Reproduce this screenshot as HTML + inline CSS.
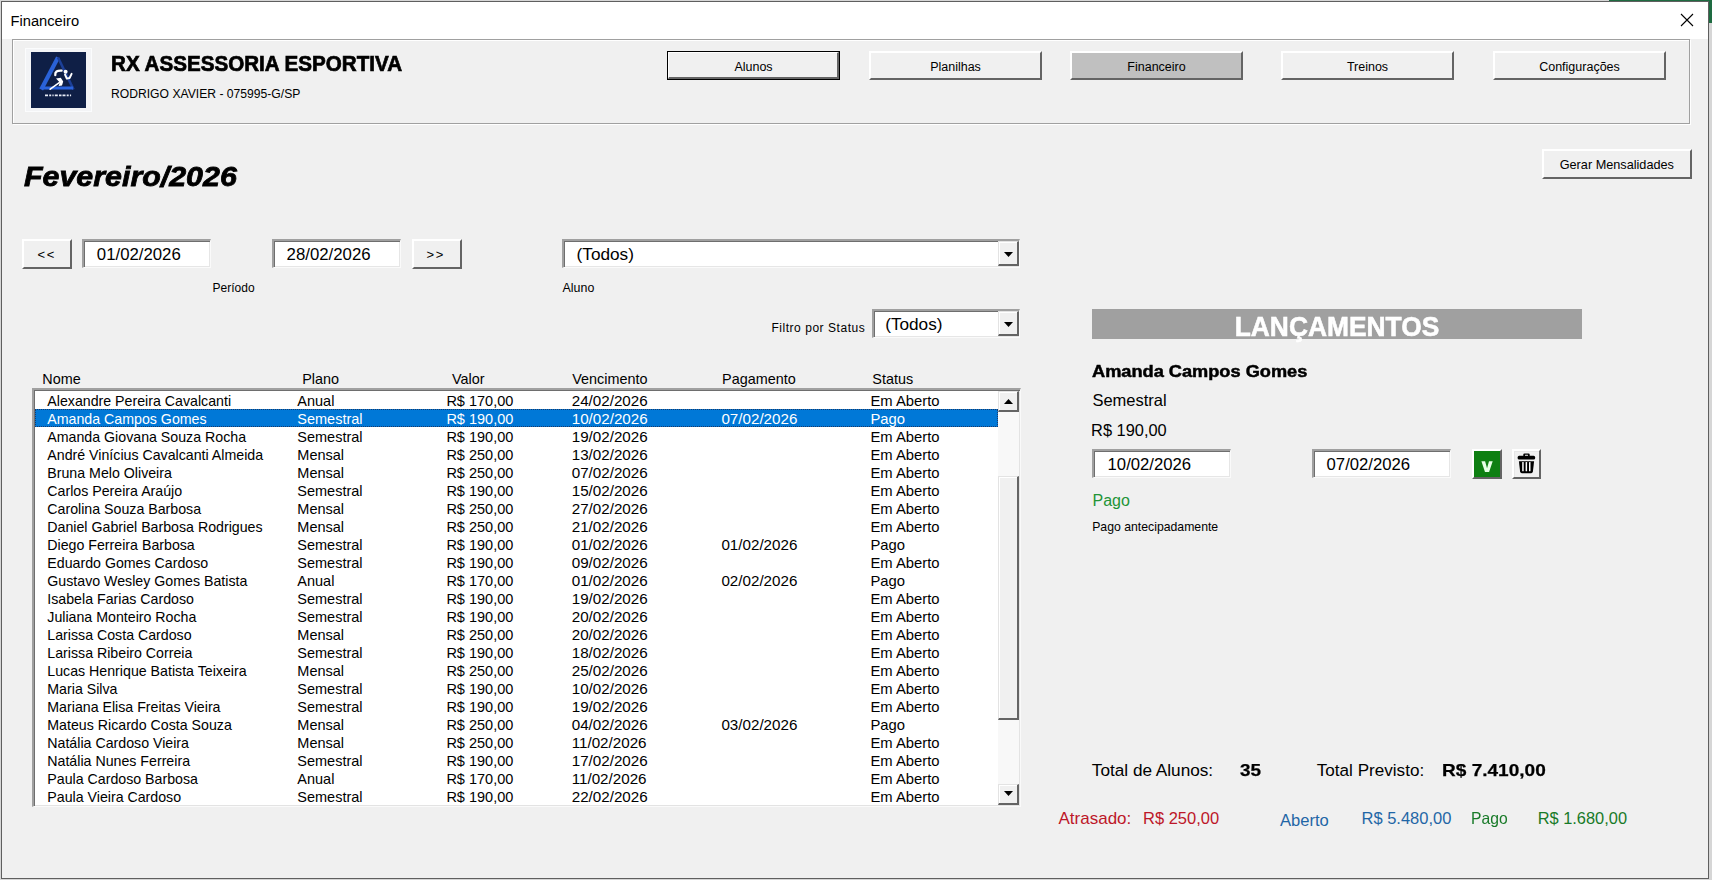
<!DOCTYPE html>
<html><head><meta charset="utf-8">
<style>
*{margin:0;padding:0;box-sizing:border-box}
html,body{width:1712px;height:880px;overflow:hidden;background:#d6d6d6;font-family:"Liberation Sans",sans-serif;color:#000}
.a{position:absolute;white-space:nowrap;line-height:1}
</style></head><body>
<div class="a" style="left:0px;top:0px;width:1712px;height:880px;background:#d6d6d6"></div>
<div class="a" style="left:1609px;top:0px;width:103px;height:2px;background:#1e6b41"></div>
<div class="a" style="left:1709px;top:0px;width:3px;height:23px;background:#1e6b41"></div>
<div class="a" style="left:1px;top:1px;width:1708px;height:878px;background:#f0f0f0;border:1px solid #5f5f5f"></div>
<div class="a" style="left:2px;top:2px;width:1706px;height:37px;background:#fff"></div>
<span class="a" style="left:10.50px;top:14.00px;font-size:14.7px;letter-spacing:0px;">Financeiro</span>
<svg class="a" style="left:1680px;top:13px" width="14" height="14"><path d="M1 1L13 13M13 1L1 13" stroke="#000" stroke-width="1.1"/></svg>
<div class="a" style="left:13px;top:40px;width:1678px;height:85px;border:1px solid #fff"></div>
<div class="a" style="left:12px;top:39px;width:1678px;height:85px;border:1px solid #a0a0a0"></div>
<div class="a" style="left:25px;top:48px;width:67px;height:64px;background:#f3f4f6;border:1px solid #fbfcfd"></div>
<svg class="a" style="left:31px;top:52px" width="55" height="56" viewBox="0 0 55 56">
<defs>
<linearGradient id="tl" x1="0" y1="0" x2="1" y2="0"><stop offset="0" stop-color="#1539a0"/><stop offset="0.5" stop-color="#2d68e0"/><stop offset="1" stop-color="#1a45b0"/></linearGradient>
<filter id="gl"><feGaussianBlur stdDeviation="0.6"/></filter>
</defs>
<rect width="55" height="56" fill="#0f1f46"/>
<g filter="url(#gl)">
<path d="M27 5.5 L10.2 37.5" stroke="#2a62d8" stroke-width="4.2"/>
<path d="M27 5.5 L42.6 37.5" stroke="#1b3f98" stroke-width="2.6"/>
<path d="M11 36 H42" stroke="#2b64dc" stroke-width="3"/>
</g>
<circle cx="34.6" cy="19.8" r="2" fill="#fff"/>
<path d="M24.3 23 Q23.6 18.2 30.6 18.6" stroke="#fff" stroke-width="2.3" fill="none" stroke-linecap="round"/>
<path d="M34 22.5 L35.8 26.6 L38.6 26 L40.6 21.8" stroke="#fff" stroke-width="1.9" fill="none" stroke-linejoin="round" stroke-linecap="round"/>
<path d="M25 26.4 L29.8 25.8 L32.2 29.4 L31 33.4 L27.6 33.9 L28.8 30.6 Z" fill="#fff"/>
<path d="M28.6 30.4 L19.2 37.2" stroke="#fff" stroke-width="1.6" stroke-linecap="round"/>
<path d="M14 43.4 H41" stroke="#e8ecf6" stroke-width="1.7" stroke-dasharray="3 1.2 2 1.2 1.2 1.2 3 1.2 2.5 1" />
</svg>
<span class="a" style="left:111.40px;top:53.00px;font-size:21.8px;letter-spacing:0px;transform:scaleX(0.945);transform-origin:0 0;font-weight:bold;-webkit-text-stroke:0.7px #000">RX ASSESSORIA ESPORTIVA</span>
<span class="a" style="left:111.00px;top:88.00px;font-size:12.15px;letter-spacing:0px;">RODRIGO XAVIER - 075995-G/SP</span>
<div class="a" style="left:667px;top:51px;width:173px;height:29px;background:#f0f0f0;border:1px solid #000"></div>
<div class="a" style="left:668px;top:52px;width:171px;height:27px;border-top:1px solid #fff;border-left:1px solid #fff;border-right:2px solid #646464;border-bottom:2px solid #646464"></div>
<span class="a" style="left:667px;width:173px;text-align:center;top:61.00px;font-size:12.5px">Alunos</span>
<div class="a" style="left:869px;top:51px;width:173px;height:29px;background:#f0f0f0;border-top:2px solid #fff;border-left:2px solid #fff;border-right:2px solid #646464;border-bottom:2px solid #646464"></div>
<span class="a" style="left:869px;width:173px;text-align:center;top:61.00px;font-size:12.5px">Planilhas</span>
<div class="a" style="left:1070px;top:51px;width:173px;height:29px;background:#c0c0c0;border-top:2px solid #fff;border-left:2px solid #fff;border-right:2px solid #646464;border-bottom:2px solid #646464"></div>
<span class="a" style="left:1070px;width:173px;text-align:center;top:61.00px;font-size:12.5px">Financeiro</span>
<div class="a" style="left:1281px;top:51px;width:173px;height:29px;background:#f0f0f0;border-top:2px solid #fff;border-left:2px solid #fff;border-right:2px solid #646464;border-bottom:2px solid #646464"></div>
<span class="a" style="left:1281px;width:173px;text-align:center;top:61.00px;font-size:12.5px">Treinos</span>
<div class="a" style="left:1493px;top:51px;width:173px;height:29px;background:#f0f0f0;border-top:2px solid #fff;border-left:2px solid #fff;border-right:2px solid #646464;border-bottom:2px solid #646464"></div>
<span class="a" style="left:1493px;width:173px;text-align:center;top:61.00px;font-size:12.5px">Configurações</span>
<div class="a" style="left:1542px;top:149px;width:150px;height:30px;background:#f0f0f0;border-top:2px solid #fff;border-left:2px solid #fff;border-right:2px solid #646464;border-bottom:2px solid #646464"></div>
<span class="a" style="left:1559.70px;top:159.00px;font-size:12.7px;letter-spacing:0px;">Gerar Mensalidades</span>
<span class="a" style="left:24.30px;top:163.00px;font-size:28px;letter-spacing:0px;transform:scaleX(1.085);transform-origin:0 0;font-weight:bold;font-style:italic;-webkit-text-stroke:0.8px #000">Fevereiro/2026</span>
<div class="a" style="left:22px;top:239px;width:50px;height:30px;background:#f0f0f0;border-top:2px solid #fff;border-left:2px solid #fff;border-right:2px solid #646464;border-bottom:2px solid #646464"></div>
<span class="a" style="left:37.50px;top:248.00px;font-size:13px;letter-spacing:1.6px;">&lt;&lt;</span>
<div class="a" style="left:412px;top:239px;width:50px;height:30px;background:#f0f0f0;border-top:2px solid #fff;border-left:2px solid #fff;border-right:2px solid #646464;border-bottom:2px solid #646464"></div>
<span class="a" style="left:426.50px;top:248.00px;font-size:13px;letter-spacing:1.6px;">&gt;&gt;</span>
<div class="a" style="left:82px;top:239px;width:129px;height:29px;background:#fff;border-top:2px solid #a0a0a0;border-left:2px solid #a0a0a0;border-right:1px solid #fafafa;border-bottom:1px solid #fafafa;box-shadow:inset 1px 1px 0 #6e6e6e, inset -1px -1px 0 #e6e6e6"></div>
<span class="a" style="left:96.80px;top:247.00px;font-size:16.8px;letter-spacing:0px;">01/02/2026</span>
<div class="a" style="left:272px;top:239px;width:129px;height:29px;background:#fff;border-top:2px solid #a0a0a0;border-left:2px solid #a0a0a0;border-right:1px solid #fafafa;border-bottom:1px solid #fafafa;box-shadow:inset 1px 1px 0 #6e6e6e, inset -1px -1px 0 #e6e6e6"></div>
<span class="a" style="left:286.60px;top:247.00px;font-size:16.8px;letter-spacing:0px;">28/02/2026</span>
<span class="a" style="left:212.60px;top:282.00px;font-size:12px;letter-spacing:0px;">Período</span>
<div class="a" style="left:562px;top:239px;width:458px;height:29px;background:#fff;border-top:2px solid #a0a0a0;border-left:2px solid #a0a0a0;border-right:1px solid #fafafa;border-bottom:1px solid #fafafa;box-shadow:inset 1px 1px 0 #6e6e6e, inset -1px -1px 0 #e6e6e6"></div>
<div class="a" style="left:998px;top:241px;width:21px;height:25px;background:#f0f0f0;border-top:1px solid #e3e3e3;border-left:1px solid #e3e3e3;border-right:2px solid #646464;border-bottom:2px solid #646464;box-shadow:inset 1px 1px 0 #fff"></div>
<svg class="a" style="left:1004px;top:252px" width="9" height="5"><path d="M0 0H9L4.5 5Z" fill="#000"/></svg>
<span class="a" style="left:576.60px;top:246.00px;font-size:17.2px;letter-spacing:0px;">(Todos)</span>
<span class="a" style="left:562.60px;top:282.00px;font-size:12.4px;letter-spacing:0px;">Aluno</span>
<span class="a" style="left:771.40px;top:322.00px;font-size:12px;letter-spacing:0.54px;">Filtro por Status</span>
<div class="a" style="left:872px;top:309px;width:148px;height:29px;background:#fff;border-top:2px solid #a0a0a0;border-left:2px solid #a0a0a0;border-right:1px solid #fafafa;border-bottom:1px solid #fafafa;box-shadow:inset 1px 1px 0 #6e6e6e, inset -1px -1px 0 #e6e6e6"></div>
<div class="a" style="left:998px;top:311px;width:21px;height:25px;background:#f0f0f0;border-top:1px solid #e3e3e3;border-left:1px solid #e3e3e3;border-right:2px solid #646464;border-bottom:2px solid #646464;box-shadow:inset 1px 1px 0 #fff"></div>
<svg class="a" style="left:1004px;top:322px" width="9" height="5"><path d="M0 0H9L4.5 5Z" fill="#000"/></svg>
<span class="a" style="left:885.20px;top:316.00px;font-size:17.2px;letter-spacing:0px;">(Todos)</span>
<span class="a" style="left:42.30px;top:372.00px;font-size:14.4px;letter-spacing:0px;">Nome</span>
<span class="a" style="left:302.20px;top:372.00px;font-size:14.4px;letter-spacing:0px;">Plano</span>
<span class="a" style="left:452.00px;top:372.00px;font-size:14.4px;letter-spacing:0px;">Valor</span>
<span class="a" style="left:572.30px;top:372.00px;font-size:14.4px;letter-spacing:0px;">Vencimento</span>
<span class="a" style="left:722.10px;top:372.00px;font-size:14.4px;letter-spacing:0px;">Pagamento</span>
<span class="a" style="left:872.30px;top:372.00px;font-size:14.4px;letter-spacing:0px;">Status</span>
<div class="a" style="left:32px;top:388px;width:989px;height:419px;background:#fff;border-top:2px solid #a0a0a0;border-left:2px solid #a0a0a0;border-right:1px solid #fafafa;border-bottom:1px solid #fafafa;box-shadow:inset 1px 1px 0 #6e6e6e, inset -1px -1px 0 #e3e3e3"></div>
<div class="a" style="left:35px;top:409px;width:963px;height:18px;background:#0078d7;outline:1px dotted #1a3a6a;outline-offset:-1px"></div>
<span class="a" style="left:47.30px;top:394.00px;font-size:14.2px;letter-spacing:0px;color:#000">Alexandre Pereira Cavalcanti</span>
<span class="a" style="left:297.30px;top:394.00px;font-size:14.5px;letter-spacing:0px;color:#000">Anual</span>
<span class="a" style="left:446.40px;top:394.00px;font-size:14.5px;letter-spacing:0px;color:#000">R$ 170,00</span>
<span class="a" style="left:571.70px;top:393.00px;font-size:15.2px;letter-spacing:0px;color:#000">24/02/2026</span>
<span class="a" style="left:870.40px;top:394.00px;font-size:14.8px;letter-spacing:0px;color:#000">Em Aberto</span>
<span class="a" style="left:47.30px;top:412.00px;font-size:14.2px;letter-spacing:0px;color:#fff">Amanda Campos Gomes</span>
<span class="a" style="left:297.30px;top:412.00px;font-size:14.5px;letter-spacing:0px;color:#fff">Semestral</span>
<span class="a" style="left:446.40px;top:412.00px;font-size:14.5px;letter-spacing:0px;color:#fff">R$ 190,00</span>
<span class="a" style="left:571.70px;top:411.00px;font-size:15.2px;letter-spacing:0px;color:#fff">10/02/2026</span>
<span class="a" style="left:721.40px;top:411.00px;font-size:15.2px;letter-spacing:0px;color:#fff">07/02/2026</span>
<span class="a" style="left:870.40px;top:412.00px;font-size:14.8px;letter-spacing:0px;color:#fff">Pago</span>
<span class="a" style="left:47.30px;top:430.00px;font-size:14.2px;letter-spacing:0px;color:#000">Amanda Giovana Souza Rocha</span>
<span class="a" style="left:297.30px;top:430.00px;font-size:14.5px;letter-spacing:0px;color:#000">Semestral</span>
<span class="a" style="left:446.40px;top:430.00px;font-size:14.5px;letter-spacing:0px;color:#000">R$ 190,00</span>
<span class="a" style="left:571.70px;top:429.00px;font-size:15.2px;letter-spacing:0px;color:#000">19/02/2026</span>
<span class="a" style="left:870.40px;top:430.00px;font-size:14.8px;letter-spacing:0px;color:#000">Em Aberto</span>
<span class="a" style="left:47.30px;top:448.00px;font-size:14.2px;letter-spacing:0px;color:#000">André Vinícius Cavalcanti Almeida</span>
<span class="a" style="left:297.30px;top:448.00px;font-size:14.5px;letter-spacing:0px;color:#000">Mensal</span>
<span class="a" style="left:446.40px;top:448.00px;font-size:14.5px;letter-spacing:0px;color:#000">R$ 250,00</span>
<span class="a" style="left:571.70px;top:447.00px;font-size:15.2px;letter-spacing:0px;color:#000">13/02/2026</span>
<span class="a" style="left:870.40px;top:448.00px;font-size:14.8px;letter-spacing:0px;color:#000">Em Aberto</span>
<span class="a" style="left:47.30px;top:466.00px;font-size:14.2px;letter-spacing:0px;color:#000">Bruna Melo Oliveira</span>
<span class="a" style="left:297.30px;top:466.00px;font-size:14.5px;letter-spacing:0px;color:#000">Mensal</span>
<span class="a" style="left:446.40px;top:466.00px;font-size:14.5px;letter-spacing:0px;color:#000">R$ 250,00</span>
<span class="a" style="left:571.70px;top:465.00px;font-size:15.2px;letter-spacing:0px;color:#000">07/02/2026</span>
<span class="a" style="left:870.40px;top:466.00px;font-size:14.8px;letter-spacing:0px;color:#000">Em Aberto</span>
<span class="a" style="left:47.30px;top:484.00px;font-size:14.2px;letter-spacing:0px;color:#000">Carlos Pereira Araújo</span>
<span class="a" style="left:297.30px;top:484.00px;font-size:14.5px;letter-spacing:0px;color:#000">Semestral</span>
<span class="a" style="left:446.40px;top:484.00px;font-size:14.5px;letter-spacing:0px;color:#000">R$ 190,00</span>
<span class="a" style="left:571.70px;top:483.00px;font-size:15.2px;letter-spacing:0px;color:#000">15/02/2026</span>
<span class="a" style="left:870.40px;top:484.00px;font-size:14.8px;letter-spacing:0px;color:#000">Em Aberto</span>
<span class="a" style="left:47.30px;top:502.00px;font-size:14.2px;letter-spacing:0px;color:#000">Carolina Souza Barbosa</span>
<span class="a" style="left:297.30px;top:502.00px;font-size:14.5px;letter-spacing:0px;color:#000">Mensal</span>
<span class="a" style="left:446.40px;top:502.00px;font-size:14.5px;letter-spacing:0px;color:#000">R$ 250,00</span>
<span class="a" style="left:571.70px;top:501.00px;font-size:15.2px;letter-spacing:0px;color:#000">27/02/2026</span>
<span class="a" style="left:870.40px;top:502.00px;font-size:14.8px;letter-spacing:0px;color:#000">Em Aberto</span>
<span class="a" style="left:47.30px;top:520.00px;font-size:14.2px;letter-spacing:0px;color:#000">Daniel Gabriel Barbosa Rodrigues</span>
<span class="a" style="left:297.30px;top:520.00px;font-size:14.5px;letter-spacing:0px;color:#000">Mensal</span>
<span class="a" style="left:446.40px;top:520.00px;font-size:14.5px;letter-spacing:0px;color:#000">R$ 250,00</span>
<span class="a" style="left:571.70px;top:519.00px;font-size:15.2px;letter-spacing:0px;color:#000">21/02/2026</span>
<span class="a" style="left:870.40px;top:520.00px;font-size:14.8px;letter-spacing:0px;color:#000">Em Aberto</span>
<span class="a" style="left:47.30px;top:538.00px;font-size:14.2px;letter-spacing:0px;color:#000">Diego Ferreira Barbosa</span>
<span class="a" style="left:297.30px;top:538.00px;font-size:14.5px;letter-spacing:0px;color:#000">Semestral</span>
<span class="a" style="left:446.40px;top:538.00px;font-size:14.5px;letter-spacing:0px;color:#000">R$ 190,00</span>
<span class="a" style="left:571.70px;top:537.00px;font-size:15.2px;letter-spacing:0px;color:#000">01/02/2026</span>
<span class="a" style="left:721.40px;top:537.00px;font-size:15.2px;letter-spacing:0px;color:#000">01/02/2026</span>
<span class="a" style="left:870.40px;top:538.00px;font-size:14.8px;letter-spacing:0px;color:#000">Pago</span>
<span class="a" style="left:47.30px;top:556.00px;font-size:14.2px;letter-spacing:0px;color:#000">Eduardo Gomes Cardoso</span>
<span class="a" style="left:297.30px;top:556.00px;font-size:14.5px;letter-spacing:0px;color:#000">Semestral</span>
<span class="a" style="left:446.40px;top:556.00px;font-size:14.5px;letter-spacing:0px;color:#000">R$ 190,00</span>
<span class="a" style="left:571.70px;top:555.00px;font-size:15.2px;letter-spacing:0px;color:#000">09/02/2026</span>
<span class="a" style="left:870.40px;top:556.00px;font-size:14.8px;letter-spacing:0px;color:#000">Em Aberto</span>
<span class="a" style="left:47.30px;top:574.00px;font-size:14.2px;letter-spacing:0px;color:#000">Gustavo Wesley Gomes Batista</span>
<span class="a" style="left:297.30px;top:574.00px;font-size:14.5px;letter-spacing:0px;color:#000">Anual</span>
<span class="a" style="left:446.40px;top:574.00px;font-size:14.5px;letter-spacing:0px;color:#000">R$ 170,00</span>
<span class="a" style="left:571.70px;top:573.00px;font-size:15.2px;letter-spacing:0px;color:#000">01/02/2026</span>
<span class="a" style="left:721.40px;top:573.00px;font-size:15.2px;letter-spacing:0px;color:#000">02/02/2026</span>
<span class="a" style="left:870.40px;top:574.00px;font-size:14.8px;letter-spacing:0px;color:#000">Pago</span>
<span class="a" style="left:47.30px;top:592.00px;font-size:14.2px;letter-spacing:0px;color:#000">Isabela Farias Cardoso</span>
<span class="a" style="left:297.30px;top:592.00px;font-size:14.5px;letter-spacing:0px;color:#000">Semestral</span>
<span class="a" style="left:446.40px;top:592.00px;font-size:14.5px;letter-spacing:0px;color:#000">R$ 190,00</span>
<span class="a" style="left:571.70px;top:591.00px;font-size:15.2px;letter-spacing:0px;color:#000">19/02/2026</span>
<span class="a" style="left:870.40px;top:592.00px;font-size:14.8px;letter-spacing:0px;color:#000">Em Aberto</span>
<span class="a" style="left:47.30px;top:610.00px;font-size:14.2px;letter-spacing:0px;color:#000">Juliana Monteiro Rocha</span>
<span class="a" style="left:297.30px;top:610.00px;font-size:14.5px;letter-spacing:0px;color:#000">Semestral</span>
<span class="a" style="left:446.40px;top:610.00px;font-size:14.5px;letter-spacing:0px;color:#000">R$ 190,00</span>
<span class="a" style="left:571.70px;top:609.00px;font-size:15.2px;letter-spacing:0px;color:#000">20/02/2026</span>
<span class="a" style="left:870.40px;top:610.00px;font-size:14.8px;letter-spacing:0px;color:#000">Em Aberto</span>
<span class="a" style="left:47.30px;top:628.00px;font-size:14.2px;letter-spacing:0px;color:#000">Larissa Costa Cardoso</span>
<span class="a" style="left:297.30px;top:628.00px;font-size:14.5px;letter-spacing:0px;color:#000">Mensal</span>
<span class="a" style="left:446.40px;top:628.00px;font-size:14.5px;letter-spacing:0px;color:#000">R$ 250,00</span>
<span class="a" style="left:571.70px;top:627.00px;font-size:15.2px;letter-spacing:0px;color:#000">20/02/2026</span>
<span class="a" style="left:870.40px;top:628.00px;font-size:14.8px;letter-spacing:0px;color:#000">Em Aberto</span>
<span class="a" style="left:47.30px;top:646.00px;font-size:14.2px;letter-spacing:0px;color:#000">Larissa Ribeiro Correia</span>
<span class="a" style="left:297.30px;top:646.00px;font-size:14.5px;letter-spacing:0px;color:#000">Semestral</span>
<span class="a" style="left:446.40px;top:646.00px;font-size:14.5px;letter-spacing:0px;color:#000">R$ 190,00</span>
<span class="a" style="left:571.70px;top:645.00px;font-size:15.2px;letter-spacing:0px;color:#000">18/02/2026</span>
<span class="a" style="left:870.40px;top:646.00px;font-size:14.8px;letter-spacing:0px;color:#000">Em Aberto</span>
<span class="a" style="left:47.30px;top:664.00px;font-size:14.2px;letter-spacing:0px;color:#000">Lucas Henrique Batista Teixeira</span>
<span class="a" style="left:297.30px;top:664.00px;font-size:14.5px;letter-spacing:0px;color:#000">Mensal</span>
<span class="a" style="left:446.40px;top:664.00px;font-size:14.5px;letter-spacing:0px;color:#000">R$ 250,00</span>
<span class="a" style="left:571.70px;top:663.00px;font-size:15.2px;letter-spacing:0px;color:#000">25/02/2026</span>
<span class="a" style="left:870.40px;top:664.00px;font-size:14.8px;letter-spacing:0px;color:#000">Em Aberto</span>
<span class="a" style="left:47.30px;top:682.00px;font-size:14.2px;letter-spacing:0px;color:#000">Maria Silva</span>
<span class="a" style="left:297.30px;top:682.00px;font-size:14.5px;letter-spacing:0px;color:#000">Semestral</span>
<span class="a" style="left:446.40px;top:682.00px;font-size:14.5px;letter-spacing:0px;color:#000">R$ 190,00</span>
<span class="a" style="left:571.70px;top:681.00px;font-size:15.2px;letter-spacing:0px;color:#000">10/02/2026</span>
<span class="a" style="left:870.40px;top:682.00px;font-size:14.8px;letter-spacing:0px;color:#000">Em Aberto</span>
<span class="a" style="left:47.30px;top:700.00px;font-size:14.2px;letter-spacing:0px;color:#000">Mariana Elisa Freitas Vieira</span>
<span class="a" style="left:297.30px;top:700.00px;font-size:14.5px;letter-spacing:0px;color:#000">Semestral</span>
<span class="a" style="left:446.40px;top:700.00px;font-size:14.5px;letter-spacing:0px;color:#000">R$ 190,00</span>
<span class="a" style="left:571.70px;top:699.00px;font-size:15.2px;letter-spacing:0px;color:#000">19/02/2026</span>
<span class="a" style="left:870.40px;top:700.00px;font-size:14.8px;letter-spacing:0px;color:#000">Em Aberto</span>
<span class="a" style="left:47.30px;top:718.00px;font-size:14.2px;letter-spacing:0px;color:#000">Mateus Ricardo Costa Souza</span>
<span class="a" style="left:297.30px;top:718.00px;font-size:14.5px;letter-spacing:0px;color:#000">Mensal</span>
<span class="a" style="left:446.40px;top:718.00px;font-size:14.5px;letter-spacing:0px;color:#000">R$ 250,00</span>
<span class="a" style="left:571.70px;top:717.00px;font-size:15.2px;letter-spacing:0px;color:#000">04/02/2026</span>
<span class="a" style="left:721.40px;top:717.00px;font-size:15.2px;letter-spacing:0px;color:#000">03/02/2026</span>
<span class="a" style="left:870.40px;top:718.00px;font-size:14.8px;letter-spacing:0px;color:#000">Pago</span>
<span class="a" style="left:47.30px;top:736.00px;font-size:14.2px;letter-spacing:0px;color:#000">Natália Cardoso Vieira</span>
<span class="a" style="left:297.30px;top:736.00px;font-size:14.5px;letter-spacing:0px;color:#000">Mensal</span>
<span class="a" style="left:446.40px;top:736.00px;font-size:14.5px;letter-spacing:0px;color:#000">R$ 250,00</span>
<span class="a" style="left:571.70px;top:735.00px;font-size:15.2px;letter-spacing:0px;color:#000">11/02/2026</span>
<span class="a" style="left:870.40px;top:736.00px;font-size:14.8px;letter-spacing:0px;color:#000">Em Aberto</span>
<span class="a" style="left:47.30px;top:754.00px;font-size:14.2px;letter-spacing:0px;color:#000">Natália Nunes Ferreira</span>
<span class="a" style="left:297.30px;top:754.00px;font-size:14.5px;letter-spacing:0px;color:#000">Semestral</span>
<span class="a" style="left:446.40px;top:754.00px;font-size:14.5px;letter-spacing:0px;color:#000">R$ 190,00</span>
<span class="a" style="left:571.70px;top:753.00px;font-size:15.2px;letter-spacing:0px;color:#000">17/02/2026</span>
<span class="a" style="left:870.40px;top:754.00px;font-size:14.8px;letter-spacing:0px;color:#000">Em Aberto</span>
<span class="a" style="left:47.30px;top:772.00px;font-size:14.2px;letter-spacing:0px;color:#000">Paula Cardoso Barbosa</span>
<span class="a" style="left:297.30px;top:772.00px;font-size:14.5px;letter-spacing:0px;color:#000">Anual</span>
<span class="a" style="left:446.40px;top:772.00px;font-size:14.5px;letter-spacing:0px;color:#000">R$ 170,00</span>
<span class="a" style="left:571.70px;top:771.00px;font-size:15.2px;letter-spacing:0px;color:#000">11/02/2026</span>
<span class="a" style="left:870.40px;top:772.00px;font-size:14.8px;letter-spacing:0px;color:#000">Em Aberto</span>
<span class="a" style="left:47.30px;top:790.00px;font-size:14.2px;letter-spacing:0px;color:#000">Paula Vieira Cardoso</span>
<span class="a" style="left:297.30px;top:790.00px;font-size:14.5px;letter-spacing:0px;color:#000">Semestral</span>
<span class="a" style="left:446.40px;top:790.00px;font-size:14.5px;letter-spacing:0px;color:#000">R$ 190,00</span>
<span class="a" style="left:571.70px;top:789.00px;font-size:15.2px;letter-spacing:0px;color:#000">22/02/2026</span>
<span class="a" style="left:870.40px;top:790.00px;font-size:14.8px;letter-spacing:0px;color:#000">Em Aberto</span>
<div class="a" style="left:998px;top:391px;width:21px;height:414px;background:#f8f8f8"></div>
<div class="a" style="left:998px;top:391px;width:21px;height:21px;background:#f0f0f0;border-top:1px solid #e3e3e3;border-left:1px solid #e3e3e3;border-right:2px solid #646464;border-bottom:2px solid #646464;box-shadow:inset 1px 1px 0 #fff"></div>
<svg class="a" style="left:1004px;top:399px" width="9" height="5"><path d="M0 5H9L4.5 0Z" fill="#000"/></svg>
<div class="a" style="left:998px;top:476px;width:21px;height:244px;background:#f0f0f0;border-top:1px solid #e3e3e3;border-left:1px solid #e3e3e3;border-right:2px solid #646464;border-bottom:2px solid #646464;box-shadow:inset 1px 1px 0 #fff"></div>
<div class="a" style="left:998px;top:784px;width:21px;height:21px;background:#f0f0f0;border-top:1px solid #e3e3e3;border-left:1px solid #e3e3e3;border-right:2px solid #646464;border-bottom:2px solid #646464;box-shadow:inset 1px 1px 0 #fff"></div>
<svg class="a" style="left:1004px;top:791px" width="9" height="5"><path d="M0 0H9L4.5 5Z" fill="#000"/></svg>
<div class="a" style="left:1092px;top:309px;width:490px;height:30px;background:#a0a0a0"></div>
<span class="a" style="left:1092px;width:490px;text-align:center;top:312.00px;font-size:28.5px;font-weight:bold;color:#fff;letter-spacing:0px;-webkit-text-stroke:0.6px #fff;transform:scaleX(0.925);transform-origin:50% 0">LANÇAMENTOS</span>
<span class="a" style="left:1091.60px;top:363.00px;font-size:17px;letter-spacing:0px;transform:scaleX(1.07);transform-origin:0 0;font-weight:bold;-webkit-text-stroke:0.5px #000">Amanda Campos Gomes</span>
<span class="a" style="left:1092.40px;top:392.00px;font-size:16.5px;letter-spacing:0px;">Semestral</span>
<span class="a" style="left:1091.10px;top:422.00px;font-size:16.4px;letter-spacing:0px;">R$ 190,00</span>
<div class="a" style="left:1092px;top:449px;width:139px;height:29px;background:#fff;border-top:2px solid #a0a0a0;border-left:2px solid #a0a0a0;border-right:1px solid #fafafa;border-bottom:1px solid #fafafa;box-shadow:inset 1px 1px 0 #6e6e6e, inset -1px -1px 0 #e6e6e6"></div>
<span class="a" style="left:1107.60px;top:457.00px;font-size:16.7px;letter-spacing:0px;">10/02/2026</span>
<div class="a" style="left:1312px;top:449px;width:139px;height:29px;background:#fff;border-top:2px solid #a0a0a0;border-left:2px solid #a0a0a0;border-right:1px solid #fafafa;border-bottom:1px solid #fafafa;box-shadow:inset 1px 1px 0 #6e6e6e, inset -1px -1px 0 #e6e6e6"></div>
<span class="a" style="left:1326.60px;top:457.00px;font-size:16.7px;letter-spacing:0px;">07/02/2026</span>
<div class="a" style="left:1472px;top:449px;width:30px;height:30px;background:#0e7f12;border-top:2px solid #fff;border-left:2px solid #fff;border-right:2px solid #646464;border-bottom:2px solid #646464"></div>
<svg class="a" style="left:1480px;top:460px" width="14" height="13"><path d="M1.4 1.3H5.1L7.05 8.2L9 1.3H12.7L9.1 12H5z" fill="#e6ffe6"/></svg>
<div class="a" style="left:1512px;top:449px;width:29px;height:30px;background:#f0f0f0;border-top:2px solid #fff;border-left:2px solid #fff;border-right:2px solid #646464;border-bottom:2px solid #646464"></div>
<div class="a" style="left:1514px;top:451px;width:25px;height:26px;border-top:1px solid #e6e6e6;border-left:1px solid #e6e6e6"></div>
<svg class="a" style="left:1517px;top:453px" width="19" height="21" viewBox="0 0 19 21">
<path d="M6.3 3.2v-1.6q0-1.2 1.2-1.2h4q1.2 0 1.2 1.2v1.6z M8 2.9v-0.8q0-0.3 0.3-0.3h2.4q0.3 0 0.3 0.3v0.8z" fill="#000" fill-rule="evenodd"/>
<path d="M2.2 2.8h14.4q1.6 0 1.6 1.6v0.6q0 1.6-1.6 1.6h-14.4q-1.6 0-1.6-1.6v-0.6q0-1.6 1.6-1.6z" fill="#000"/>
<path d="M1.9 8.2h15.2l-1.2 10.4q-0.3 1.6-1.8 1.6h-9.2q-1.5 0-1.8-1.6z" fill="#000"/>
<rect x="5.2" y="9" width="1.5" height="9.2" rx="0.5" fill="#fff"/>
<rect x="8.6" y="9" width="1.5" height="9.2" rx="0.5" fill="#fff"/>
<rect x="12" y="9" width="1.5" height="9.2" rx="0.5" fill="#fff"/>
</svg>
<span class="a" style="left:1092.50px;top:493.00px;font-size:16px;letter-spacing:0px;color:#229437">Pago</span>
<span class="a" style="left:1092.20px;top:521.00px;font-size:12.25px;letter-spacing:0px;">Pago antecipadamente</span>
<span class="a" style="left:1091.80px;top:762.00px;font-size:17.2px;letter-spacing:0px;">Total de Alunos:</span>
<span class="a" style="left:1240.00px;top:762.00px;font-size:17px;letter-spacing:0px;transform:scaleX(1.11);transform-origin:0 0;font-weight:bold;-webkit-text-stroke:0.25px #000">35</span>
<span class="a" style="left:1316.80px;top:762.00px;font-size:17.1px;letter-spacing:0px;">Total Previsto:</span>
<span class="a" style="left:1442.00px;top:762.00px;font-size:17px;letter-spacing:0px;transform:scaleX(1.12);transform-origin:0 0;font-weight:bold;-webkit-text-stroke:0.25px #000">R$ 7.410,00</span>
<span class="a" style="left:1058.50px;top:810.00px;font-size:17px;letter-spacing:0px;color:#bd1729">Atrasado:</span>
<span class="a" style="left:1143.00px;top:810.00px;font-size:16.5px;letter-spacing:0px;color:#bd1729">R$ 250,00</span>
<span class="a" style="left:1279.90px;top:813.00px;font-size:16.6px;letter-spacing:0px;color:#1f66a6">Aberto</span>
<span class="a" style="left:1361.50px;top:810.00px;font-size:16.5px;letter-spacing:0px;color:#1f66a6">R$ 5.480,00</span>
<span class="a" style="left:1471.20px;top:810.00px;font-size:16.5px;letter-spacing:0px;transform:scaleX(0.95);transform-origin:0 0;color:#187a28">Pago</span>
<span class="a" style="left:1537.70px;top:810.00px;font-size:16.4px;letter-spacing:0px;color:#187a28">R$ 1.680,00</span>
</body></html>
